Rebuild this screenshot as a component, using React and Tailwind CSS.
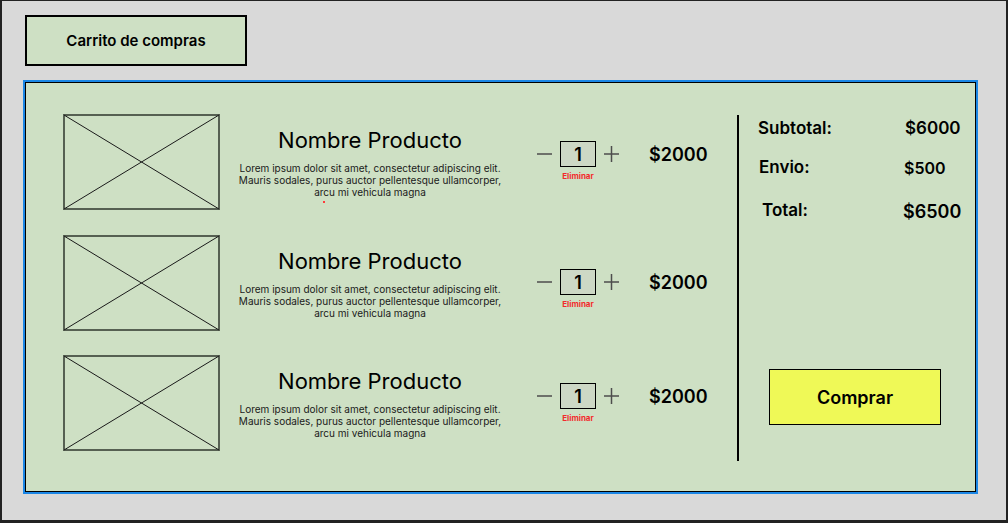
const productos = [
  { id: 1, qtyTop: 'mt-[27px]', dot: true },
  { id: 2, qtyTop: 'mt-[34px]', dot: false },
  { id: 3, qtyTop: 'mt-[28px]', dot: false },
]

function ImagePlaceholder() {
  return (
    <svg width="157" height="96" viewBox="0 0 157 96" className="shrink-0">
      <rect x="1" y="1" width="155" height="94" fill="none" stroke="#566052" strokeWidth="2" />
      <line x1="1" y1="1" x2="156" y2="95" stroke="#1a1a1a" strokeWidth="1" />
      <line x1="156" y1="1" x2="1" y2="95" stroke="#1a1a1a" strokeWidth="1" />
    </svg>
  )
}

function Minus() {
  return (
    <div className="h-[26px] flex items-center">
      <svg width="15" height="16" viewBox="0 0 15 16">
        <line x1="0" y1="8" x2="15" y2="8" stroke="#4d4d4d" strokeWidth="1.5" />
      </svg>
    </div>
  )
}

function Plus() {
  return (
    <div className="h-[26px] flex items-center">
      <svg width="15" height="16" viewBox="0 0 15 16">
        <line x1="0" y1="8" x2="15" y2="8" stroke="#4d4d4d" strokeWidth="1.5" />
        <line x1="7.5" y1="0" x2="7.5" y2="16" stroke="#4d4d4d" strokeWidth="1.5" />
      </svg>
    </div>
  )
}

function ProductoRow({ producto }) {
  return (
    <div className="flex items-start">
      <ImagePlaceholder />
      <div className="ml-[10px] w-[280px] pt-[13px] flex flex-col">
        <h2 className="text-[22px] leading-[26px] text-center text-black">Nombre Producto</h2>
        <p className="mt-[9px] text-[10px] leading-[12px] text-center text-[#1a1a1a]">
          Lorem ipsum dolor sit amet, consectetur adipiscing elit.
          <br />
          Mauris sodales, purus auctor pellentesque ullamcorper,
          <br />
          arcu mi vehicula magna
        </p>
        {producto.dot && <div className="mt-[3px] ml-[93px] h-[2px] w-[2px] bg-[#ff3b3b]" />}
      </div>
      <div className={`ml-[27px] flex items-start ${producto.qtyTop}`}>
        <Minus />
        <div className="ml-[8px] flex flex-col items-center">
          <div className="w-[36px] h-[26px] border-[1.5px] border-black bg-[#cdd8c5] flex items-center justify-center text-[18px] font-semibold text-black">
            1
          </div>
          <span className="mt-[4px] text-[8px] leading-[10px] font-bold text-[#f22c2c]">Eliminar</span>
        </div>
        <div className="ml-[8px]">
          <Plus />
        </div>
        <div className="ml-[30px] h-[26px] flex items-center text-[18px] font-semibold text-black">$2000</div>
      </div>
    </div>
  )
}

export default function App() {
  return (
    <div className="w-[1008px] h-[523px] border-t border-x-2 border-b-[3px] border-[#222] bg-[#d9d9d9] font-['Inter','Liberation_Sans',sans-serif] overflow-hidden">
      <div className="ml-[23px] mt-[14px] w-[222px] h-[51px] pt-[2px] border-2 border-black bg-[#cee0c4] flex items-center justify-center text-[15px] font-semibold text-black">
        Carrito de compras
      </div>

      <div className="ml-[21px] mt-[14px] w-[955px] h-[414px] border-2 border-[#1b87e6]">
        <div className="h-full border border-black bg-[#cee0c4] pl-[37px] pt-[31px] flex items-start">
          <div className="w-[674px] flex flex-col">
            <ProductoRow producto={productos[0]} />
            <div className="mt-[25px]">
              <ProductoRow producto={productos[1]} />
            </div>
            <div className="mt-[24px]">
              <ProductoRow producto={productos[2]} />
            </div>
          </div>

          <div className="mt-[1px] w-[2px] h-[346px] bg-black" />

          <div className="flex-1 flex flex-col pt-[5px]">
            <div className="flex items-center h-[20px] pl-[19px] font-semibold text-black">
              <span className="w-[147px] text-[17px]">Subtotal:</span>
              <span className="text-[17px]">$6000</span>
            </div>
            <div className="mt-[19px] flex items-center h-[20px] pl-[20px] font-semibold text-black">
              <span className="w-[145px] text-[17px]">Envio:</span>
              <span className="text-[16px]">$500</span>
            </div>
            <div className="mt-[23px] flex items-center h-[20px] pl-[23px] font-semibold text-black">
              <span className="w-[141px] text-[17px]">Total:</span>
              <span className="text-[18px]">$6500</span>
            </div>

            <button className="mt-[148px] ml-[30px] w-[172px] h-[56px] border border-black bg-[#eff957] text-[18px] font-semibold text-black">
              Comprar
            </button>
          </div>
        </div>
      </div>
    </div>
  )
}
